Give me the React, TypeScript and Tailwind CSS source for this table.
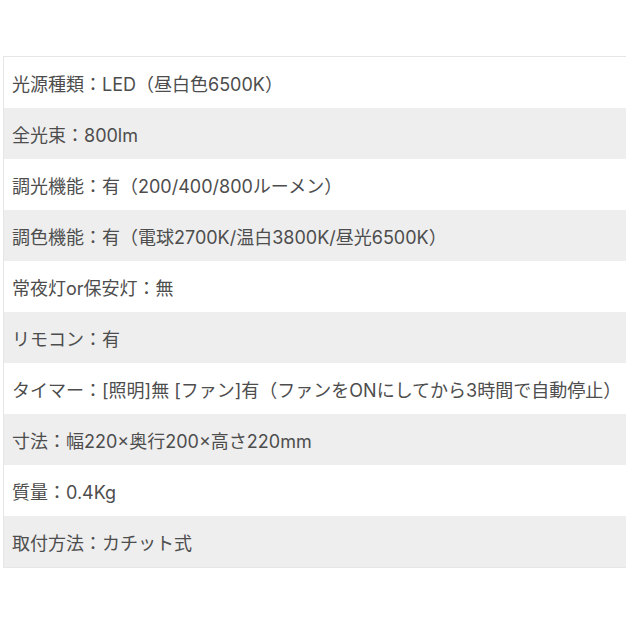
const specs = [
  "光源種類：LED（昼白色6500K）",
  "全光束：800lm",
  "調光機能：有（200/400/800ルーメン）",
  "調色機能：有（電球2700K/温白3800K/昼光6500K）",
  "常夜灯or保安灯：無",
  "リモコン：有",
  "タイマー：[照明]無 [ファン]有（ファンをONにしてから3時間で自動停止）",
  "寸法：幅220×奥行200×高さ220mm",
  "質量：0.4Kg",
  "取付方法：カチット式",
];

export default function App() {
  return (
    <div className="w-[626px] h-[626px] bg-white pt-[56px] pl-[3px] font-['Inter','Noto_Sans_CJK_JP',sans-serif]">
      <div className="border-t border-l border-b border-[#e6e6e6]">
        {specs.map((text, i) => (
          <div
            key={i}
            className={
              "h-[51px] flex items-center pl-[8px] pt-[3px] text-[18px] text-[#4d4d4d] whitespace-nowrap " +
              (i % 2 === 1 ? "bg-[#eeeeee]" : "bg-white")
            }
          >
            {text}
          </div>
        ))}
      </div>
    </div>
  );
}
